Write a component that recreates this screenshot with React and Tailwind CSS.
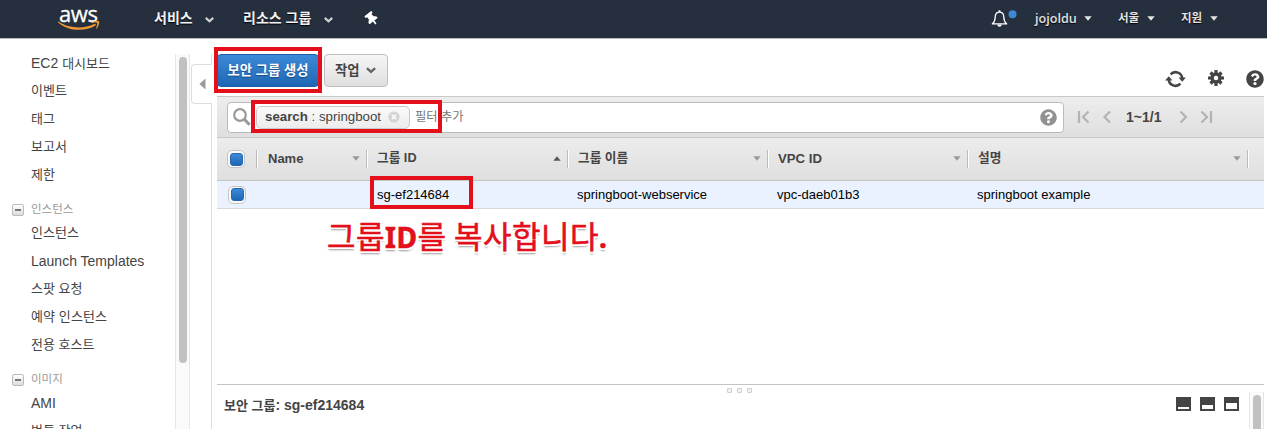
import { FaThumbtack, FaQuestionCircle } from "react-icons/fa";

const KR = "font-['Liberation_Sans','Noto_Sans_CJK_KR',sans-serif]";

function Chevron({ className }) {
  return (
    <svg viewBox="0 0 9 6" className={className} fill="none" stroke="currentColor" strokeWidth="2.2">
      <path d="M0.8 0.9 L4.5 4.2 L8.2 0.9" />
    </svg>
  );
}

function Triangle({ up, className }) {
  return (
    <svg viewBox="0 0 8 5" className={className} fill="currentColor">
      <path d={up ? "M0.3 4.7 L4 0.3 L7.7 4.7Z" : "M0.3 0.3 L4 4.7 L7.7 0.3Z"} />
    </svg>
  );
}

function Gear({ className }) {
  return (
    <svg viewBox="-8 -8 16 16" className={className} fill="none" stroke="currentColor">
      <circle r="4" strokeWidth="3.4" />
      <path d="M0 -8 V-4 M0 8 V4 M-8 0 H-4 M8 0 H4 M-5.5 -5.5 L-3 -3 M5.5 5.5 L3 3 M-5.5 5.5 L-3 3 M5.5 -5.5 L3 -3" strokeWidth="3.2" />
    </svg>
  );
}

function Logo() {
  return (
    <div className="relative h-[38px] w-[42px]">
      <span className="absolute top-0 left-[1px] font-['Open_Sans',sans-serif] text-[22px] leading-[26px] tracking-[-0.4px] text-white [-webkit-text-stroke:0.3px_#fff]">
        aws
      </span>
      <svg viewBox="0 0 42 10" className="absolute top-[20px] left-0 h-[10px] w-[42px]">
        <path d="M0.6 1.6 C10 8.6 26 9.4 36.3 4.1 C37.5 3.5 38.5 4.6 37.4 5.5 C27 12.2 9.5 11.2 0.2 2.4 C-0.2 1.8 0.2 1.3 0.6 1.6Z" fill="#f19a35" />
        <path d="M33.8 2.3 C36 0.7 40.2 0.6 41 1.3 C41.8 2.2 40.6 6.8 38.5 8.6 C38 8.9 37.8 8.6 38 8.1 C38.8 6.3 39.7 3.7 39.1 3 C38.4 2.2 35.8 2.6 34.2 2.9 C33.7 2.9 33.4 2.6 33.8 2.3Z" fill="#f19a35" />
      </svg>
    </div>
  );
}

function Header() {
  const shadow = "[text-shadow:0_1px_1px_#000]";
  return (
    <header className="flex h-[39px] shrink-0 items-start border-b border-[#b7babd] bg-[#252f3e] pl-[58px] text-[#f4f4f4]">
      <Logo />
      <div className="flex h-[37px] flex-1 items-center text-[14px] font-bold">
        <span className={`ml-[54px] w-[51px] ${shadow}`}>서비스</span>
        <Chevron className="mt-[2px] h-[6px] w-[9px] text-[#d0d2d4]" />
        <span className={`ml-[29px] w-[81px] ${shadow}`}>리소스 그룹</span>
        <Chevron className="mt-[2px] h-[6px] w-[9px] text-[#d0d2d4]" />
        <FaThumbtack className="ml-[33px] h-[14px] w-[12px] -rotate-[38deg] text-white" />
      </div>
      <div className="flex h-[37px] w-[276px] items-center text-[12px] font-bold text-[#e4e4e4]">
        <svg viewBox="0 0 28 20" className="h-[20px] w-[28px]" fill="none" stroke="#fff" strokeWidth="1.3">
          <path d="M7.9 3.2 C5 3.6 4.2 5.8 4.2 8.3 C4.2 11.8 3.2 13.3 1.3 14.9 H15.7 C13.8 13.3 12.8 11.8 12.8 8.3 C12.8 5.8 12 3.6 9.1 3.2Z" strokeLinejoin="round" />
          <path d="M8.5 1.3 V3" strokeWidth="1.8" />
          <path d="M6.3 15.6 A2.2 2.2 0 0 0 10.7 15.6Z" fill="#fff" stroke="none" />
          <circle cx="21.5" cy="5.2" r="4" fill="#3c87d6" stroke="none" />
        </svg>
        <span className={`ml-[16px] w-[49px] pt-px font-['Open_Sans',sans-serif] text-[12.6px] font-semibold ${shadow}`}>jojoldu</span>
        <Triangle className="h-[5px] w-[8px]" />
        <span className={`ml-[26px] w-[29px] pt-px text-[11.5px] ${shadow}`}>서울</span>
        <Triangle className="h-[5px] w-[8px]" />
        <span className={`ml-[26px] w-[29px] pt-px text-[11.5px] ${shadow}`}>지원</span>
        <Triangle className="h-[5px] w-[8px]" />
      </div>
    </header>
  );
}

function Item({ children }) {
  return <li className="h-[28px] pl-[31px] text-[13px] leading-[28px] whitespace-nowrap text-[#444]">{children}</li>;
}

function Group({ className, children }) {
  return (
    <li className={`flex items-center pt-[9px] pl-[12px] ${className}`}>
      <span className="mt-[3px] flex size-[12px] items-center justify-center rounded-[2px] border border-[#bbb] bg-linear-to-b from-white to-[#ddd]">
        <i className="h-[2px] w-[6px] bg-[#777]" />
      </span>
      <span className="ml-[7px] text-[11.5px] leading-[20px] text-[#999]">{children}</span>
    </li>
  );
}

function Sidebar() {
  return (
    <aside className="flex w-[190px] shrink-0 overflow-hidden">
      <ul className="w-[175px] pt-[10px]">
        <Item><span className="text-[14px]">EC2 </span>대시보드</Item>
        <Item>이벤트</Item>
        <Item>태그</Item>
        <Item>보고서</Item>
        <Item>제한</Item>
        <Group className="h-[30px]">인스턴스</Group>
        <Item>인스턴스</Item>
        <Item><span className="text-[14px]">Launch Templates</span></Item>
        <Item>스팟 요청</Item>
        <Item><span className="tracking-[0.1px]">예약 인스턴스</span></Item>
        <Item>전용 호스트</Item>
        <Group className="h-[30px]">이미지</Group>
        <Item><span className="text-[14px]">AMI</span></Item>
        <Item>번들 작업</Item>
      </ul>
      <div className="mt-[15px] w-[15px] border-x border-[#e6e6e6] bg-[#fafafa] pt-[3px] pl-[3px]">
        <div className="h-[306px] w-[8px] rounded-full bg-[#c1c1c1]" />
      </div>
    </aside>
  );
}

function CollapseHandle() {
  return (
    <div className="flex w-[22px] shrink-0 flex-col pl-px">
      <div className="mt-[15px] h-[10px] shrink-0 border-r border-[#ddd]" />
      <div className="flex h-[40px] shrink-0 items-center rounded-l-[4px] border border-r-0 border-[#ddd] pl-[7px]">
        <svg viewBox="0 0 7 12" className="h-[12px] w-[7px]"><path d="M6.5 0.5 V11.5 L0.5 6Z" fill="#999" /></svg>
      </div>
      <div className="flex-1 border-r border-[#ddd]" />
    </div>
  );
}

function Check() {
  return (
    <span className="flex size-[18px] items-center justify-center rounded-[5px] border border-[#c4c4c4] bg-[#fafafa]">
      <i className="size-[13px] rounded-[3px] border border-[#2468ae] bg-linear-to-b from-[#3d8ad8] to-[#1d67b5]" />
    </span>
  );
}

function Column({ width, up, children }) {
  return (
    <div className={`flex items-center ${width}`}>
      <i className="h-[18px] w-[2px] border-r border-l border-l-[#bbb] border-r-white" />
      <span className="flex-1 pl-[9px] text-[12.7px] font-bold text-[#444]">{children}</span>
      <Triangle up={up} className={`mr-[6px] h-[5px] w-[8px] ${up ? "text-[#555]" : "text-[#999]"}`} />
    </div>
  );
}

function Toolbar() {
  return (
    <div className="flex h-[42px] items-start justify-between">
      <div className="flex gap-[5px]">
        <button className="h-[33px] w-[102px] rounded-[4px] border border-[#1c5fa8] bg-linear-to-b from-[#3c8ad8] to-[#1f67b4] text-[13.3px] font-bold whitespace-nowrap text-white [text-shadow:0_1px_1px_#174a82]">
          보안 그룹 생성
        </button>
        <button className="flex h-[33px] w-[64px] items-center rounded-[4px] border border-[#bfbfbf] bg-linear-to-b from-[#f6f6f6] to-[#dfdfdf] pl-[10px] text-[13.3px] font-bold text-[#444]">
          <span className="w-[31px] text-left">작업</span>
          <Chevron className="h-[7px] w-[10px] text-[#666]" />
        </button>
      </div>
      <div className="flex items-center pt-[16px] text-[#444]">
        <svg viewBox="0 0 21 18" className="mr-[22px] h-[18px] w-[21px]" fill="none" stroke="currentColor" strokeWidth="2.5">
          <path d="M5.6 4.3 A6.8 6.8 0 0 1 17.3 8.6" />
          <path d="M15.4 13.7 A6.8 6.8 0 0 1 3.7 9.4" />
          <path d="M13.6 7.6 H20.9 L17.2 11.8Z" fill="currentColor" stroke="none" />
          <path d="M0.1 10.4 H7.4 L3.8 6.2Z" fill="currentColor" stroke="none" />
        </svg>
        <Gear className="-mt-[2px] mr-[22px] size-[16px]" />
        <FaQuestionCircle className="size-[18px]" />
      </div>
    </div>
  );
}

function Pager() {
  return (
    <div className="flex items-center text-[#b3b3b3]">
      <svg viewBox="0 0 36 14" className="h-[14px] w-[36px]" fill="none" stroke="currentColor" strokeWidth="2.2">
        <path d="M2 1 V13 M11.5 1.5 L6 7 L11.5 12.5 M33 1.5 L27.5 7 L33 12.5" />
      </svg>
      <span className="mx-[13px] w-[39px] text-[14px] font-bold whitespace-nowrap text-[#444]">1~1/1</span>
      <svg viewBox="0 0 36 14" className="h-[14px] w-[36px]" fill="none" stroke="currentColor" strokeWidth="2.2">
        <path d="M2.5 1.5 L8 7 L2.5 12.5 M23.5 1.5 L29 7 L23.5 12.5 M33 1 V13" />
      </svg>
    </div>
  );
}

function SearchBar() {
  return (
    <div className="flex h-[42px] items-center border-y border-[#c8c8c8] bg-linear-to-b from-[#ededed] to-[#dfdfdf] pl-[10px]">
      <div className="flex h-[31px] w-[837px] items-center rounded-[4px] border border-[#bbb] bg-white pr-[6px] pl-[5px]">
        <svg viewBox="0 0 18 18" className="size-[18px] shrink-0" fill="none" stroke="#999">
          <circle cx="7" cy="7" r="5.8" strokeWidth="2.2" />
          <path d="M11.4 11.4 L16.6 16.8" strokeWidth="3" />
        </svg>
        <div className="ml-[5px] flex h-[23px] w-[154px] items-center rounded-[5px] border border-[#c9c9c9] bg-linear-to-b from-[#fafafa] to-[#ececec] pl-[8px] text-[13.3px] whitespace-nowrap text-[#444]">
          <span className="w-[123px]"><b>search</b> : springboot</span>
          <svg viewBox="0 0 12 12" className="size-[12px]"><circle cx="6" cy="6" r="5.6" fill="#d4d4d4" /><path d="M3.8 3.8 L8.2 8.2 M8.2 3.8 L3.8 8.2" stroke="#fff" strokeWidth="1.5" /></svg>
        </div>
        <span className="ml-[5px] flex-1 text-[12.3px] text-[#777]">필터 추가</span>
        <FaQuestionCircle className="size-[17px] text-[#919191]" />
      </div>
      <div className="ml-[13px]"><Pager /></div>
    </div>
  );
}

function Table() {
  return (
    <div className="text-[13px]">
      <div className="flex h-[43px] items-center border-b border-[#c4c4c4] bg-linear-to-b from-[#ececec] to-[#dfdfdf] pl-[10px]">
        <div className="w-[29px]"><Check /></div>
        <Column width="w-[110px]"><span className="pl-px text-[13px]">Name</span></Column>
        <Column width="w-[201px]" up>그룹 ID</Column>
        <Column width="w-[200px]">그룹 이름</Column>
        <Column width="w-[200px]"><span className="text-[13.2px]">VPC ID</span></Column>
        <Column width="w-[280px]">설명</Column>
        <i className="h-[18px] w-[2px] border-r border-l border-l-[#bbb] border-r-white" />
      </div>
      <div className="flex h-[28px] items-center border-b border-[#d5d9e0] bg-[#e9f2fe] pl-[11px] whitespace-nowrap text-black">
        <div className="w-[149px]"><Check /></div>
        <span className="w-[200px]">sg-ef214684</span>
        <span className="w-[200px]">springboot-webservice</span>
        <span className="w-[200px]">vpc-daeb01b3</span>
        <span>springboot example</span>
      </div>
    </div>
  );
}

function DetailPane() {
  const inner = ["mt-[10px] h-[2px]", "mt-[8px] h-[4px]", "mt-[6px] h-[6px]"];
  return (
    <div className="flex h-[45px] border-t border-[#c4c4c4]">
      <div className="w-[510px] pt-[11px] pl-[7px] text-[13px] leading-[18px] font-bold text-[#444]">
        보안 그룹<span className="text-[14px]">: sg-ef214684</span>
      </div>
      <div className="flex flex-1 gap-[5px] pt-[3px]">
        {[0, 1, 2].map((k) => (
          <i key={k} className="size-[5px] rounded-[1px] border border-[#cfcfcf] bg-[#f3f3f3]" />
        ))}
      </div>
      <div className="flex gap-[9px] pt-[12px]">
        {inner.map((c) => (
          <div key={c} className="h-[14px] w-[15px] bg-[#444] px-[2px]">
            <div className={`bg-white ${c}`} />
          </div>
        ))}
      </div>
      <div className="mt-[7px] ml-[10px] w-[15px] border-x border-[#e6e6e6] bg-[#fafafa] pt-[3px] pl-[3px]">
        <div className="h-full w-[8px] rounded-t-full bg-[#c1c1c1]" />
      </div>
    </div>
  );
}

function Annotations() {
  const box = "absolute border-[4px] border-[#e3101c]";
  return (
    <>
      <div className={`${box} top-[47px] left-[214px] h-[46px] w-[108px]`} />
      <div className={`${box} top-[100px] left-[251px] h-[33px] w-[191px]`} />
      <div className={`${box} top-[176px] left-[370px] h-[33px] w-[103px]`} />
      <div className="absolute top-[214px] left-[327px] font-['Noto_Sans_CJK_KR',sans-serif] text-[31px] leading-[42px] tracking-[0.5px] whitespace-nowrap text-[#e3101c] [-webkit-text-stroke:0.6px_#e3101c] [text-shadow:2px_0_0_#fff,-2px_0_0_#fff,0_2px_0_#fff,0_-2px_0_#fff,2px_2px_0_#fff,-2px_2px_0_#fff,0_3px_2px_#999]">
        그룹<span className="font-['Noto_Sans'] text-[28px] font-bold">ID</span>를 복사합니다<span className="font-['Noto_Sans'] text-[28px] font-bold">.</span>
      </div>
    </>
  );
}

export default function App() {
  return (
    <div className={`relative flex h-[429px] w-[1267px] flex-col overflow-hidden bg-white ${KR}`}>
      <Header />
      <div className="flex min-h-0 flex-1">
        <Sidebar />
        <CollapseHandle />
        <main className="flex min-w-0 flex-1 flex-col pt-[15px] pr-[3px] pl-[5px]">
          <Toolbar />
          <SearchBar />
          <Table />
          <div className="flex-1" />
          <DetailPane />
        </main>
      </div>
      <Annotations />
    </div>
  );
}
